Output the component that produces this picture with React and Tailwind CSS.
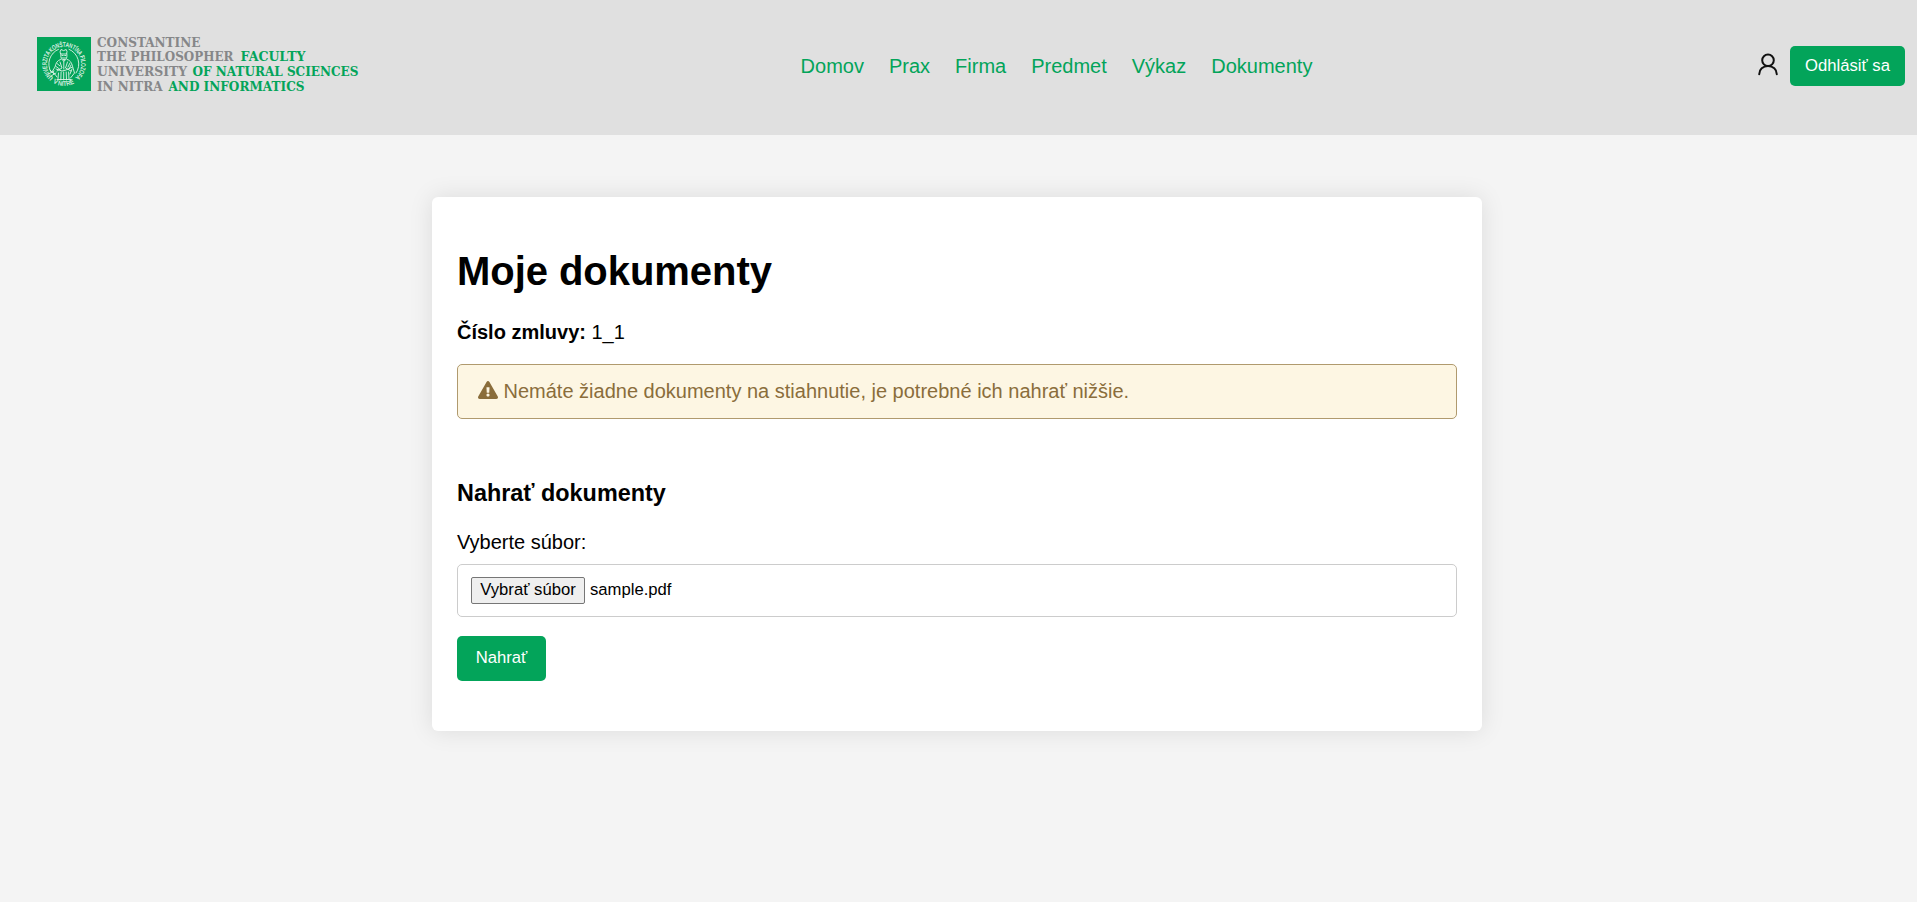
import React from "react";
import { FaExclamationTriangle } from "react-icons/fa";

const links = ["Domov", "Prax", "Firma", "Predmet", "Výkaz", "Dokumenty"];

const logoText = [
  { x: 97, y: 46.6, w: 103.5, t: "CONSTANTINE", c: "#868789" },
  { x: 97, y: 61.4, w: 136.5, t: "THE PHILOSOPHER", c: "#868789" },
  { x: 240.5, y: 61.4, w: 65, t: "FACULTY", c: "#03a45a" },
  { x: 97, y: 76.1, w: 90, t: "UNIVERSITY", c: "#868789" },
  { x: 192.5, y: 76.1, w: 166, t: "OF NATURAL SCIENCES", c: "#03a45a" },
  { x: 97, y: 90.8, w: 65.5, t: "IN NITRA", c: "#868789" },
  { x: 168.5, y: 90.8, w: 136, t: "AND INFORMATICS", c: "#03a45a" },
];

function Logo() {
  return (
    <svg width="327" height="64" viewBox="37 32 327 64" className="block shrink-0" fontFamily="'DejaVu Serif', serif">
      <rect x="37" y="37" width="54" height="54" fill="#03a45a" />
      <defs>
        <path id="ringTop" d="M53.2 77.6 A17.3 17.3 0 1 1 74.8 77.6" />
        <path id="ringBottom" d="M53 82.8 A21.8 21.8 0 0 0 75 82.8" />
      </defs>
      <g fill="#e9f7ef" stroke="#e9f7ef" strokeWidth="0.15" fontFamily="'Liberation Sans', sans-serif" fontSize="6.3">
        <text>
          <textPath href="#ringTop" textLength="84" lengthAdjust="spacingAndGlyphs">UNIVERZITA KONŠTANTÍNA FILOZOFA</textPath>
        </text>
        <text>
          <textPath href="#ringBottom" textLength="22" lengthAdjust="spacingAndGlyphs">V NITRE</textPath>
        </text>
      </g>
      <g fill="none" stroke="#e0f3e8" strokeWidth="0.9" strokeLinecap="round">
        <path d="M58.5 49.3 A15.7 15.7 0 0 0 51 72 M69 49.3 A15.7 15.7 0 0 1 76 73" />
        <path d="M60.2 51.5 L61 49.5 L63.6 50.6 L66.2 49.5 L67 51.5 L66.6 54 H61 Z M60.8 54 C60.3 58 62 60.5 63.8 61 C66 60.5 67.4 58 66.9 54" />
        <path d="M62 55.5 H63.2 M64.7 55.5 H65.8 M62 58 H65.6 M63 59.5 H65" />
        <path d="M60.5 59.5 C57 60.5 56 63 55 67 L52.5 71 L57 77 M67.3 59.5 C71 60.5 72 64 73 68 L74.5 73 L70.5 78" />
        <path d="M60 62 L62 68 L57 71 M67.5 62 L65.5 68 L71 71 M63.8 61 V69 M56 69 L62 71 L66 70 L72.5 67" />
        <path d="M58.5 73 L58 79 M61.1 72 L60.8 80 M63.7 72 V80 M66.2 72 L66.5 80 M68.6 72 L69 79 M57 79.5 H71" />
        <path d="M57 63.5 L60 66 M56 66.5 L59.5 69 M70 63 L68 67 M71 65 L69 69 M72 69 L70 74 M50 70 L54 74 M49.5 73.5 L54 71 M51 76 L56 73" />
      </g>
      {logoText.map((l) => (
        <text key={l.t} x={l.x} y={l.y} fill={l.c} fontSize="13" fontWeight="700" textLength={l.w} lengthAdjust="spacingAndGlyphs">
          {l.t}
        </text>
      ))}
    </svg>
  );
}

function PersonIcon() {
  return (
    <svg width="20" height="23" viewBox="0 0 20 23" fill="none" stroke="#111" strokeWidth="2" strokeLinecap="round" className="block">
      <circle cx="10" cy="7.3" r="5.8" />
      <path d="M1.2 21.2 C1.2 16.4 5 13.1 10 13.1 C15 13.1 18.8 16.4 18.8 21.2" />
    </svg>
  );
}

export default function App() {
  return (
    <div className="min-h-screen bg-[#f4f4f4] font-['Liberation_Sans',Arial,sans-serif] text-xl leading-[23px] text-black">
      <header className="flex h-[135px] items-start bg-[#e0e0e0] pl-[37px] pr-3">
        <div className="pt-8">
          <Logo />
        </div>
        <nav className="ml-[436.6px] flex gap-[25px] pt-[55px] text-[#03a45a]">
          {links.map((l) => (
            <a key={l} href="#">{l}</a>
          ))}
        </nav>
        <div className="ml-auto flex items-start gap-3 pt-[46px]">
          <div className="pt-[7px]">
            <PersonIcon />
          </div>
          <button className="flex h-10 w-[115px] justify-center whitespace-nowrap rounded-[5px] bg-[#03a45a] pt-[10px] text-[16.667px] leading-[19px] text-white">
            Odhlásiť sa
          </button>
        </div>
      </header>
      <main className="ml-[432px] mt-[62px] h-[534px] w-[1050px] rounded-[6px] bg-white px-[25px] pt-[51px] shadow-[0_0_25px_rgba(0,0,0,0.1)]">
        <h1 className="text-[40px] font-bold leading-[46px] tracking-[-0.05px]">Moje dokumenty</h1>
        <p className="mt-[27px]">
          <strong>Číslo zmluvy:</strong> 1_1
        </p>
        <div className="mt-5 flex h-[55px] items-start rounded-[5px] border border-[#b09a6e] bg-[#fdf6e3] px-5 pt-[15px] text-[#8a6d3b]">
          <FaExclamationTriangle className="size-5" />
          <span className="ml-[5.5px]">Nemáte žiadne dokumenty na stiahnutie, je potrebné ich nahrať nižšie.</span>
        </div>
        <h3 className="mt-[61px] text-[23.4px] font-bold leading-[27px]">Nahrať dokumenty</h3>
        <div className="mt-6">Vyberte súbor:</div>
        <div className="mt-[10px] flex h-[53px] items-start rounded-[5px] border border-[#ccc] px-[13px] pt-3 text-[16.667px] leading-[19px]">
          <button className="flex h-[27px] w-[114px] justify-center whitespace-nowrap rounded-[2px] border border-[#767676] bg-[#efefef] pt-[2px]">
            Vybrať súbor
          </button>
          <span className="ml-[5px] mt-[3px]">sample.pdf</span>
        </div>
        <button className="mt-[19px] flex h-[45px] w-[89px] justify-center rounded-[5px] bg-[#03a45a] pt-3 text-[16.667px] leading-[19px] text-white">
          Nahrať
        </button>
      </main>
    </div>
  );
}
